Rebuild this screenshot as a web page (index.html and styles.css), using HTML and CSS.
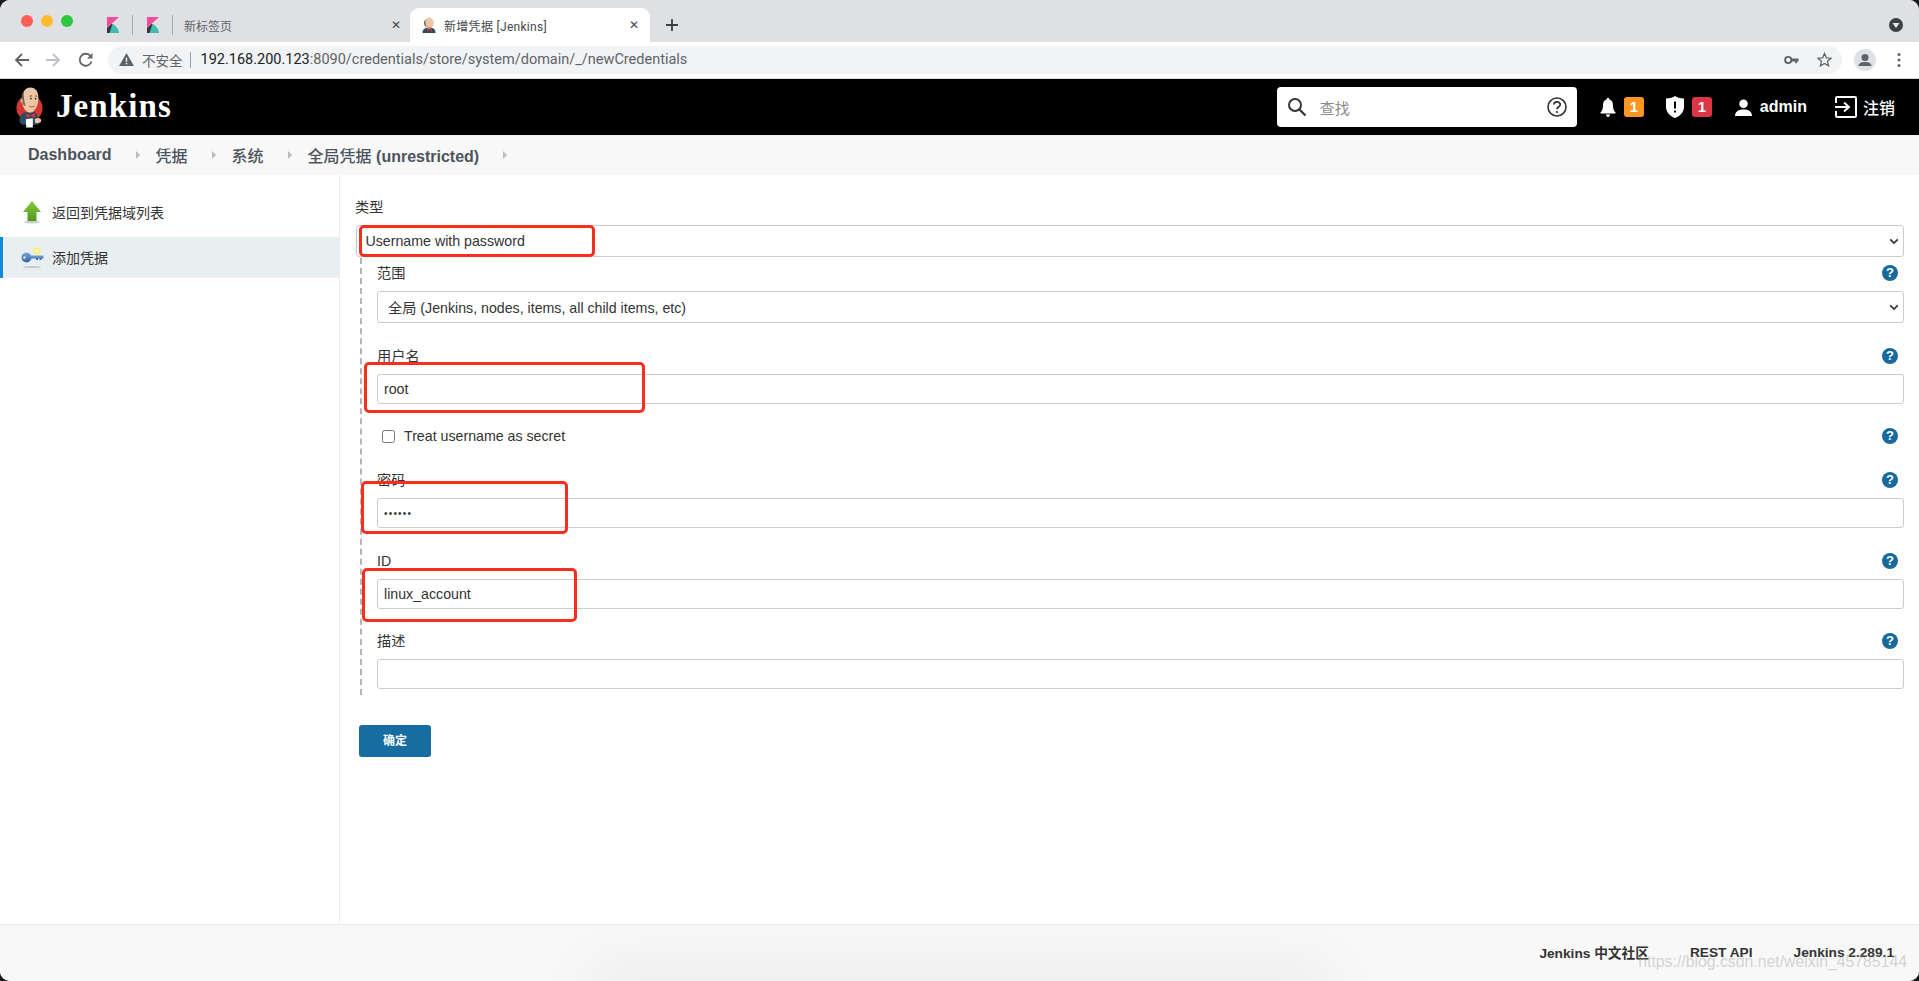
FILE: index.html
```html
<!DOCTYPE html>
<html lang="zh">
<head>
<meta charset="utf-8">
<title>新增凭据 [Jenkins]</title>
<link rel="stylesheet" href="styles.css">
</head>
<body>
<div class="window">
  <div class="tabstrip">
    <div class="lights"><i class="light red"></i><i class="light yellow"></i><i class="light green"></i></div>
    <svg class="kibana" viewBox="0 0 12 16"><path d="M0 0H12L0 11z" fill="#f04e98"/><path d="M0 11L5 6.500 12 16H0z" fill="#343741"/><path d="M5.500 7C9 8.500 11.500 12 12 16H2.500z" fill="#3ebeb0"/></svg>
    <i class="tabsep first"></i>
    <svg class="kibana" viewBox="0 0 12 16"><path d="M0 0H12L0 11z" fill="#f04e98"/><path d="M0 11L5 6.500 12 16H0z" fill="#343741"/><path d="M5.500 7C9 8.500 11.500 12 12 16H2.500z" fill="#3ebeb0"/></svg>
    <i class="tabsep second"></i>
    <div class="tab-inactive"><span class="tabtitle">新标签页</span><span class="tabx">✕</span></div>
    <div class="tab-active">
      <svg class="favicon" viewBox="0 0 14 16"><path d="M0.500 16C0.500 12.500 2.500 11 5 11H9.500C12 11 13.500 12.500 13.500 16z" fill="#2d4a63"/><ellipse cx="7" cy="6" rx="4.800" ry="5.600" fill="#eec5a5"/><path d="M2.200 7C1.800 4.500 2.500 3.500 3.500 3 3.300 5 3.500 7 4.500 9.500 3.300 9.300 2.500 8.500 2.200 7z" fill="#6e6259"/><path d="M5 9.500C6.500 10.500 8.500 10.500 10 9.500 9.500 11 8.500 11.500 7 11.500S5.500 11 5 9.500z" fill="#b9927a"/><path d="M5 11.500L7.500 13 10 11.500V14.500L7.500 13 5 14.500z" fill="#d33833"/></svg>
      <span class="tabtitle active-title">新增凭据 [Jenkins]</span><span class="tabx">✕</span>
    </div>
    <svg class="newtab" viewBox="0 0 14 14"><path d="M7 1V13M1 7H13" stroke="#3c4043" stroke-width="1.800"/></svg>
    <svg class="tabmenu" viewBox="0 0 14 14"><circle cx="7" cy="7" r="7" fill="#3c4043"/><path d="M3.500 5H10.500L7 10z" fill="#e8eaed"/></svg>
  </div>
  <div class="toolbar">
    <svg class="navbtn back" viewBox="0 0 16 16"><path d="M15 8H2M8 2L2 8l6 6" fill="none" stroke="#5f6368" stroke-width="1.800"/></svg>
    <svg class="navbtn forward" viewBox="0 0 16 16"><path d="M1 8H14M8 2l6 6-6 6" fill="none" stroke="#bdc1c6" stroke-width="1.800"/></svg>
    <svg class="navbtn reload" viewBox="0 0 16 16"><path d="M13.500 9.500A6 6 0 1 1 12 3.500" fill="none" stroke="#5f6368" stroke-width="1.800"/><path d="M14.500 1V6.500H9z" fill="#5f6368"/></svg>
    <div class="omnibox">
      <svg class="warn" viewBox="0 0 16 14"><path d="M8 0L16 14H0z" fill="#5f6368"/><path d="M7.200 5H8.800V9.500H7.200zM7.200 10.500H8.800V12H7.200z" fill="#f1f3f4"/></svg>
      <span class="insecure">不安全</span>
      <i class="omnisep"></i>
      <span class="url"><b>192.168.200.123</b>:8090/credentials/store/system/domain/_/newCredentials</span>
      <svg class="omni-key" viewBox="0 0 16 10"><circle cx="4.500" cy="5" r="3.300" fill="none" stroke="#5f6368" stroke-width="2"/><path d="M8 3.500H15.500V6.500H14V8.500H12V6.500H8z" fill="#5f6368"/></svg>
      <svg class="omni-star" viewBox="0 0 16 16"><path d="M8 1.500L10 6.200 15 6.600 11.200 9.900 12.400 14.800 8 12.200 3.600 14.800 4.800 9.900 1 6.600 6 6.200z" fill="none" stroke="#5f6368" stroke-width="1.300"/></svg>
    </div>
    <svg class="avatar" viewBox="0 0 22 22"><circle cx="11" cy="11" r="11" fill="#dee1e6"/><circle cx="11" cy="8.500" r="3.500" fill="#5f6368"/><path d="M4.500 17C5 13.500 8 13 11 13S17 13.500 17.500 17z" fill="#5f6368"/></svg>
    <svg class="kebab" viewBox="0 0 4 16"><circle cx="2" cy="2.500" r="1.500" fill="#5f6368"/><circle cx="2" cy="8" r="1.500" fill="#5f6368"/><circle cx="2" cy="13.500" r="1.500" fill="#5f6368"/></svg>
  </div>

  <header class="jk-header">
    <svg class="jk-logo" viewBox="0 0 30 44">
      <circle cx="14.500" cy="23" r="14" fill="#d33833"/>
      <path d="M4 39C3 33 5 28.500 10 27.500H20C23 28.500 24 33 24 41H7z" fill="#2d4a63"/>
      <path d="M6.500 14C6.500 6 10 1 15.500 1S24 5.500 24 12C24 16 23.500 19 22 22 20.500 25.500 17.500 28.500 14 28 9.500 27 6.500 21 6.500 14z" fill="#eec5a5"/>
      <path d="M6.500 16C5.500 11 6.500 7 8.500 5 8 9 8.500 14 10 20 10.500 22 8 21 6.500 16z" fill="#6e6259"/>
      <path d="M6 13C4.500 13 4.500 17 6.500 18.500 7.500 18 7.500 13.500 6 13z" fill="#e0ae8c"/>
      <path d="M14.500 10.500L17 10M20.500 10L22.500 10.500" stroke="#4a3a30" stroke-width="1"/>
      <circle cx="16" cy="13" r="0.900" fill="#222"/><circle cx="21" cy="13" r="0.900" fill="#222"/>
      <path d="M14 21C16 22.500 19 22 20.500 20.500" fill="none" stroke="#8c5d45" stroke-width="1"/>
      <path d="M11 29L15.500 31 20 28.500 20.500 33.500 15.500 31.500 11.500 34z" fill="#e4322b"/>
      <path d="M10.500 35L18 34V44H11z" fill="#fff"/>
      <path d="M20 35C23 33 27 33.500 27 36.500S23 40 20.500 39z" fill="#eec5a5"/>
    </svg>
    <span class="jk-name">Jenkins</span>
    <div class="jk-search">
      <svg class="search-ico" viewBox="0 0 20 20"><circle cx="8" cy="8" r="6" fill="none" stroke="#333" stroke-width="2"/><path d="M12.500 12.500L18.500 18.500" stroke="#333" stroke-width="2.200"/></svg>
      <span class="search-text">查找</span>
      <svg class="search-help" viewBox="0 0 20 20"><circle cx="10" cy="10" r="9" fill="none" stroke="#333" stroke-width="1.600"/><path d="M6.800 7.500C7 5.500 8.500 4.800 10 4.800 12 4.800 13.300 6 13.300 7.500 13.300 9.800 10 9.800 10 12.300" fill="none" stroke="#333" stroke-width="1.700"/><circle cx="10" cy="15" r="1.100" fill="#333"/></svg>
    </div>
    <div class="jk-item bell">
      <svg class="ico-bell" viewBox="0 0 16 20"><path d="M8 1C9 1 9.500 1.700 9.500 2.500 12.500 3.500 13 6 13 9 13 12 14 14 15.500 15.500V16.500H.5V15.500C2 14 3 12 3 9 3 6 3.500 3.500 6.500 2.500 6.500 1.700 7 1 8 1zM6 17.500H10C10 19 9 20 8 20S6 19 6 17.500z" fill="#fff"/></svg>
      <span class="badge orange">1</span>
    </div>
    <div class="jk-item shield">
      <svg class="ico-shield" viewBox="0 0 18 22"><path d="M9 0C11 1.500 14 2.500 18 2.500V11C18 16 14 20 9 22 4 20 0 16 0 11V2.500C4 2.500 7 1.500 9 0z" fill="#fff"/><path d="M8 5.500H10V12.500H8zM8 14.500H10V16.500H8z" fill="#000"/></svg>
      <span class="badge crimson">1</span>
    </div>
    <div class="jk-item user">
      <svg class="ico-user" viewBox="0 0 18 18"><circle cx="9" cy="5" r="4.500" fill="#fff"/><path d="M0 18C0 13 4 11 9 11S18 13 18 18z" fill="#fff"/></svg>
      <span class="jk-link">admin</span>
    </div>
    <div class="jk-item logout">
      <svg class="ico-logout" viewBox="0 0 22 22"><path d="M1 7V2C1 1.500 1.500 1 2 1H20C20.500 1 21 1.500 21 2V20C21 20.500 20.500 21 20 21H2C1.500 21 1 20.500 1 20V15" fill="none" stroke="#fff" stroke-width="2"/><path d="M0 11H13M9 6.500L14 11 9 15.500" fill="none" stroke="#fff" stroke-width="2"/></svg>
      <span class="jk-link cjk">注销</span>
    </div>
  </header>

  <nav class="crumbs">
    <span class="crumb">Dashboard</span><i class="crumb-arrow"></i>
    <span class="crumb cjk">凭据</span><i class="crumb-arrow"></i>
    <span class="crumb cjk">系统</span><i class="crumb-arrow"></i>
    <span class="crumb"><span class="cjk">全局凭据</span> (unrestricted)</span><i class="crumb-arrow"></i>
  </nav>

  <div class="main">
    <aside class="side">
      <div class="side-item">
        <svg class="side-ico" viewBox="0 0 24 24"><defs><linearGradient id="g1" x1="0" y1="0" x2="0" y2="1"><stop offset="0" stop-color="#8fc63f"/><stop offset="1" stop-color="#4c9a1a"/></linearGradient></defs><ellipse cx="12" cy="22" rx="8" ry="1.500" fill="#ccc"/><path d="M12 1L21 12H16.500V21H7.500V12H3z" fill="url(#g1)"/></svg>
        <span>返回到凭据域列表</span>
      </div>
      <div class="side-item current">
        <svg class="side-ico" viewBox="0 0 24 24"><defs><linearGradient id="g2" x1="0" y1="0" x2="0" y2="1"><stop offset="0" stop-color="#7ba4d8"/><stop offset="1" stop-color="#2f62a8"/></linearGradient></defs><ellipse cx="12" cy="22" rx="9" ry="1" fill="#c4c8ca"/><circle cx="17" cy="6" r="3.500" fill="#f7ee6a"/><circle cx="17" cy="6" r="1.800" fill="#fdfbc0"/><circle cx="6.500" cy="12.500" r="5" fill="url(#g2)"/><circle cx="4.500" cy="12.500" r="1.300" fill="#dfe9f5"/><path d="M10 10.500H23.500V13.500H21.500V15H19.500V13.500H18V15H16V13.500H10z" fill="url(#g2)"/></svg>
        <span>添加凭据</span>
      </div>
    </aside>

    <form class="content">
      <div class="f-label top">类型</div>
      <div class="f-select outer"><span>Username with password</span><svg class="chev" viewBox="0 0 12 8"><path d="M1.500 1.500L6 6l4.500-4.500" fill="none" stroke="#333" stroke-width="2"/></svg></div>

      <div class="nested">
        <div class="f-row r-scope"><span class="f-label">范围</span><span class="help">?</span></div>
        <div class="f-select"><span>全局 (Jenkins, nodes, items, all child items, etc)</span><svg class="chev" viewBox="0 0 12 8"><path d="M1.500 1.500L6 6l4.500-4.500" fill="none" stroke="#333" stroke-width="2"/></svg></div>

        <div class="f-row r-user"><span class="f-label">用户名</span><span class="help">?</span></div>
        <div class="f-input">root</div>

        <div class="f-row r-secret">
          <label class="check"><i class="checkbox"></i><span>Treat username as secret</span></label>
          <span class="help">?</span>
        </div>

        <div class="f-row r-pass"><span class="f-label">密码</span><span class="help">?</span></div>
        <div class="f-input dots">••••••</div>

        <div class="f-row r-id"><span class="f-label">ID</span><span class="help">?</span></div>
        <div class="f-input">linux_account</div>

        <div class="f-row r-desc"><span class="f-label">描述</span><span class="help">?</span></div>
        <div class="f-input"></div>
      </div>

      <div class="submit">确定</div>
    </form>
  </div>

  <footer class="jk-footer">
    <span>Jenkins 中文社区</span>
    <span>REST API</span>
    <span>Jenkins 2.289.1</span>
  </footer>

  <i class="mark m1"></i>
  <i class="mark m2"></i>
  <i class="mark m3"></i>
  <i class="mark m4"></i>
  <div class="bottom-shadow"></div>
  <div class="watermark">https://blog.csdn.net/weixin_45785144</div>
</div>
</body>
</html>
```

FILE: styles.css
```css
* { box-sizing: border-box; }
html, body { margin: 0; height: 100%; overflow: hidden; background: #1a1a1a; }
.window {
  position: relative;
  width: 1919px;
  height: 981px;
  background: #fff;
  display: flex;
  flex-direction: column;
  border-radius: 10px;
  overflow: hidden;
  font-family: "Liberation Sans", "Noto Sans CJK SC", sans-serif;
  color: #333;
}

/* browser chrome */
.tabstrip {
  height: 42px;
  flex: none;
  background: #dfe0e4;
  display: flex;
  align-items: center;
  padding-top: 8px;
  font-family: Roboto, "Noto Sans CJK SC", sans-serif;
  font-size: 12px;
  color: #5f6368;
}
.lights { display: flex; gap: 8px; margin: -8px 0 0 21px; }
.light { width: 12px; height: 12px; border-radius: 50%; }
.light.red { background: #fd5f57; }
.light.yellow { background: #febb2e; }
.light.green { background: #2bc840; }
.kibana { width: 12px; height: 16px; flex: none; margin-left: 34px; }
.kibana + .tabsep + .kibana { margin-left: 14px; }
.tabsep { width: 1px; height: 20px; background: #a8a9ad; margin-left: 13px; }
.tab-inactive { width: 226px; display: flex; align-items: center; margin-left: 11px; }
.tabtitle { white-space: nowrap; }
.tabx { font-size: 12px; color: #45474a; margin-left: auto; line-height: 1; }
.tab-inactive .tabx { margin-right: 9px; }
.tab-active {
  width: 240px;
  height: 34px;
  background: #fff;
  border-radius: 9px 9px 0 0;
  display: flex;
  align-items: center;
  padding: 0 11px 0 12px;
}
.favicon { width: 14px; height: 16px; flex: none; margin-right: 8px; }
.active-title { color: #45474a; letter-spacing: .3px; }
.newtab { width: 14px; height: 14px; flex: none; margin-left: 15px; }
.tabmenu { width: 14px; height: 14px; flex: none; margin-left: auto; margin-right: 16px; }

.toolbar {
  height: 37px;
  flex: none;
  background: #fff;
  display: flex;
  align-items: center;
  padding-bottom: 1px;
  border-bottom: 1px solid #dadce0;
}
.navbtn { width: 16px; height: 16px; flex: none; }
.back { margin-left: 14px; }
.forward { margin-left: 15px; }
.reload { margin-left: 17px; }
.omnibox {
  flex: none;
  margin-left: 14px;
  width: 1734px;
  height: 28px;
  border-radius: 14px;
  background: #f1f3f4;
  display: flex;
  align-items: center;
  padding-left: 11px;
  font-family: Roboto, "Noto Sans CJK SC", sans-serif;
  font-size: 14.500px;
  color: #5f6368;
}
.warn { width: 15px; height: 13px; flex: none; }
.insecure { margin-left: 8px; font-size: 13.500px; }
.omnisep { width: 1px; height: 16px; background: #9aa0a6; margin-left: 7px; }
.url { margin-left: 10px; white-space: nowrap; }
.url b { font-weight: 400; color: #202124; }
.omni-key { width: 15px; height: 10px; flex: none; margin-left: auto; }
.omni-star { width: 15px; height: 15px; flex: none; margin: 0 10px 0 18px; }
.avatar { width: 22px; height: 22px; flex: none; margin-left: 12px; }
.kebab { width: 4px; height: 16px; flex: none; margin-left: 21px; }

/* jenkins header */
.jk-header {
  height: 56px;
  flex: none;
  background: #000;
  display: flex;
  align-items: center;
  color: #fff;
}
.jk-logo { width: 28px; height: 42px; flex: none; margin-left: 16px; }
.jk-name {
  font-family: "Liberation Serif", serif;
  font-weight: 700;
  font-size: 33px;
  letter-spacing: 1.100px;
  margin-left: 12px;
  padding-bottom: 2px;
}
.jk-search {
  margin-left: auto;
  width: 300px;
  height: 40px;
  background: #fff;
  border-radius: 4px;
  margin-right: 23px;
  display: flex;
  align-items: center;
  padding: 0 10px;
}
.search-ico { width: 20px; height: 20px; flex: none; margin-left: 0; }
.search-text { color: #8a8a8a; font-size: 15px; margin-left: 13px; }
.search-help { width: 20px; height: 20px; flex: none; margin-left: auto; }
.jk-item { display: flex; align-items: center; font-weight: 700; font-size: 16px; }
.jk-link { white-space: nowrap; }
.ico-bell { width: 16px; height: 20px; flex: none; }
.ico-shield { width: 18px; height: 22px; flex: none; }
.ico-user { width: 17px; height: 17px; flex: none; }
.ico-logout { width: 22px; height: 22px; flex: none; margin-right: 6px; }
.badge {
  width: 20px;
  height: 20px;
  border-radius: 3px;
  margin-left: 8px;
  font-size: 15px;
  font-weight: 700;
  text-align: center;
  line-height: 20px;
  color: #fff;
}
.orange { background: #fe9621; }
.crimson { background: #dc3545; }
.bell { margin-right: 22px; }
.shield { margin-right: 23px; }
.ico-user + .jk-link { margin-left: 8px; }
.user { margin-right: 28px; }
.logout { margin-right: 24px; }
.cjk { font-weight: 500; }

/* breadcrumb */
.crumbs {
  height: 40px;
  flex: none;
  background: #f8f8f8;
  display: flex;
  align-items: center;
  padding-left: 28px;
  font-size: 16px;
  font-weight: 700;
  color: #4d545d;
}
.crumb { white-space: nowrap; }
.crumb-arrow {
  width: 0;
  height: 0;
  border-left: 4px solid #bcbcbc;
  border-top: 4px solid transparent;
  border-bottom: 4px solid transparent;
  margin: 0 16px 0 24px;
}

/* main layout */
.main { flex: 1; display: flex; min-height: 0; }
.side {
  width: 340px;
  flex: none;
  border-right: 1px solid #e9eef1;
  padding-top: 16px;
  font-size: 14px;
}
.side-item {
  height: 41px;
  display: flex;
  align-items: center;
  padding-left: 17px;
  border-left: 3px solid transparent;
  color: #333;
}
.side-item span { margin-left: 8px; }
.side-item.current { background: #e9eef1; border-left-color: #138ad6; margin-top: 5px; padding-bottom: 1px; }
.side-ico { width: 24px; height: 24px; flex: none; }

.content { flex: 1; padding: 0 15px 0 16px; font-size: 14.200px; min-width: 0; }
.f-label { font-size: 14.200px; color: #333; line-height: 18px; }
.f-label.top { margin-top: 23px; margin-left: -1px; }
.f-select, .f-input {
  display: flex;
  align-items: center;
  height: 32px;
  border: 1px solid #ccc;
  border-radius: 3px;
  background: #fff;
  color: #333;
  font-size: 14.200px;
}
.f-select { padding: 0 4px 0 10px; justify-content: space-between; }
.f-select.outer { margin-top: 9px; padding-left: 8.500px; }
.f-input { height: 30px; padding-left: 6px; }
.chev { width: 10px; height: 7px; flex: none; }
.dots { font-size: 10px; letter-spacing: 1.200px; }
.nested {
  margin: 1px 0 0 4px;
  padding: 6px 0 0 15px;
  height: 437px;
  border-left: 2px dashed #b5b5b5;
}
.f-row { display: flex; align-items: center; justify-content: space-between; }
.f-row .help { margin-right: 6px; }
.r-scope { height: 18px; margin-bottom: 9px; }
.r-user { height: 18px; margin-top: 24px; margin-bottom: 9px; }
.r-secret { height: 18px; margin-top: 23px; }
.r-pass { height: 18px; margin-top: 26px; margin-bottom: 9px; }
.r-id { height: 18px; margin-top: 24px; margin-bottom: 9px; }
.r-desc { height: 18px; margin-top: 23px; margin-bottom: 9px; }
.help {
  width: 16px;
  height: 16px;
  flex: none;
  border-radius: 50%;
  background: #186a9d;
  color: #fff;
  font-size: 13px;
  font-weight: 700;
  line-height: 16px;
  text-align: center;
}
.check { display: flex; align-items: center; font-size: 14.200px; font-weight: 400; padding-left: 5px; }
.checkbox {
  width: 13px;
  height: 13px;
  border: 1px solid #767676;
  border-radius: 2.500px;
  background: #fff;
  margin-right: 9px;
}
.submit {
  margin: 30px 0 0 3px;
  width: 72px;
  height: 32px;
  border-radius: 3px;
  background: #176ca0;
  color: #fff;
  font-size: 12px;
  font-weight: 700;
  line-height: 32px;
  text-align: center;
}

.jk-footer {
  height: 57px;
  flex: none;
  background: #f8f8f8;
  border-top: 1px solid #e9eef1;
  display: flex;
  justify-content: flex-end;
  align-items: center;
  gap: 41px;
  padding: 0 25px 2px 0;
  font-size: 13.700px;
  font-weight: 700;
  color: #333;
}

/* annotations lying over the screenshot */
.mark { position: absolute; border: 3px solid #fb2c20; border-radius: 5px; }
.m1 { left: 359px; top: 225px; width: 236px; height: 32px; }
.m2 { left: 364px; top: 362px; width: 281px; height: 51px; }
.m3 { left: 361px; top: 481px; width: 207px; height: 53px; }
.m4 { left: 362px; top: 568px; width: 215px; height: 54px; }
.bottom-shadow {
  position: absolute;
  left: 590px;
  width: 740px;
  bottom: -10px;
  height: 10px;
  box-shadow: 0 0 60px 0 rgba(0,0,0,.24);
}
.watermark {
  position: absolute;
  right: 12px;
  bottom: 10px;
  font-size: 15.800px;
  color: rgba(150,150,150,.4);
  white-space: nowrap;
}
```
